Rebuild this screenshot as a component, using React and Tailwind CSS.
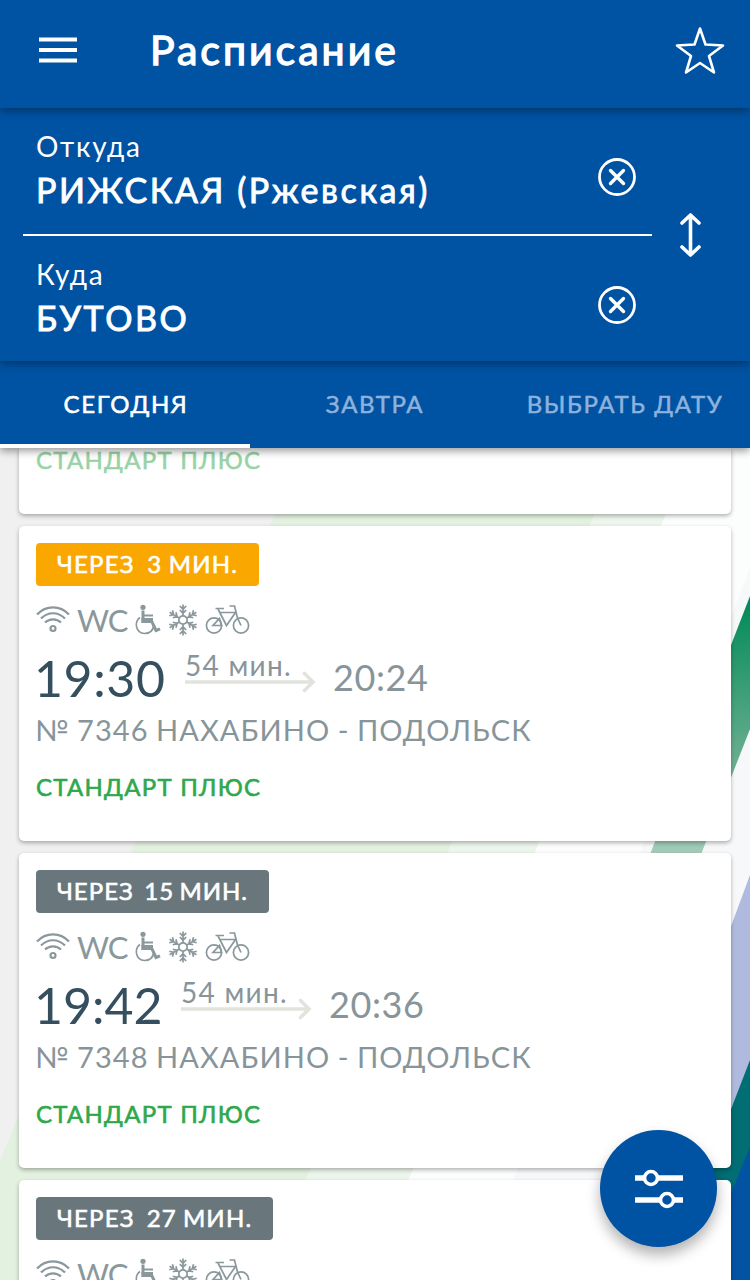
import React, { useState } from "react";

const trains = [
  {
    id: 1,
    wait: "ЧЕРЕЗ  3 МИН.",
    badge: "w-[223px] tracking-[1.2px] [word-spacing:-1.1px] bg-[#faa700]",
    time: "w-[129px] tracking-[0.6px]",
    start: "19:30",
    end: "20:24",
    route: "№ 7346 НАХАБИНО - ПОДОЛЬСК",
  },
  {
    id: 2,
    wait: "ЧЕРЕЗ  15 МИН.",
    badge: "w-[233px] tracking-[1px] [word-spacing:-1.9px] bg-[#69777d]",
    time: "w-[125px] tracking-normal",
    start: "19:42",
    end: "20:36",
    route: "№ 7348 НАХАБИНО - ПОДОЛЬСК",
  },
  {
    id: 3,
    wait: "ЧЕРЕЗ  27 МИН.",
    badge: "w-[237px] tracking-[1.2px] [word-spacing:-1.4px] bg-[#69777d]",
    time: "w-[129px] tracking-[0.6px]",
    start: "19:54",
    end: "20:48",
    route: "№ 7350 НАХАБИНО - ПОДОЛЬСК",
  },
];

const tabs = ["СЕГОДНЯ", "ЗАВТРА", "ВЫБРАТЬ ДАТУ"];

const ClearIcon = () => (
  <svg width="38" height="38" viewBox="0 0 38 38" fill="none" stroke="white">
    <circle cx="19" cy="19" r="17.5" strokeWidth="2.8" />
    <path d="M12.5 12.5 25.5 25.5M25.5 12.5 12.5 25.5" strokeWidth="3.4" strokeLinecap="round" />
  </svg>
);

const WifiIcon = () => (
  <svg width="34" height="32" viewBox="0 0 34 32" fill="none" stroke="#8a989c" strokeWidth="2.2">
    <path d="M1 10.5C10 1 24 1 33 10.5" />
    <path d="M5 14.5C12 7.5 22 7.5 29 14.5" />
    <path d="M9 18.5C13.5 14.2 20.5 14.2 25 18.5" />
    <circle cx="17" cy="24.5" r="2.5" />
  </svg>
);

const WheelchairIcon = () => (
  <svg width="26" height="32" viewBox="0 0 26 32" fill="none" stroke="#8a989c">
    <circle cx="8" cy="3.3" r="2.6" fill="#8a989c" stroke="none" />
    <path d="M8 6.5V17.5H16.8L21 26.5L25 24.8" strokeWidth="3" />
    <path d="M6.5 16.5H18" strokeWidth="5" />
    <path d="M8.5 11.5H18" strokeWidth="2" />
    <path d="M5 13.5C-1 18 .5 29 9.5 29.5C14.5 29.5 18 26.5 18.8 21.5" strokeWidth="1.6" />
  </svg>
);

const SnowIcon = () => (
  <svg width="30" height="32" viewBox="-15 -16 30 32" fill="none" stroke="#8a989c" strokeWidth="1.7">
    <circle r="4.2" />
    {[0, 60, 120, 180, 240, 300].map((angle) => (
      <path
        key={angle}
        transform={`rotate(${angle})`}
        d="M0 -4.2V-15.5M-3.2 -14 0 -10.8 3.2 -14M-3.2 -10 0 -6.8 3.2 -10"
      />
    ))}
  </svg>
);

const BikeIcon = () => (
  <svg width="45" height="32" viewBox="0 0 45 32" fill="none" stroke="#8a989c" strokeWidth="1.7">
    <circle cx="9" cy="21.5" r="7.6" />
    <circle cx="36" cy="21.5" r="7.6" />
    <path d="M8 21.5H16.5L14.5 14.5ZM13 5 21.5 21.5 30.5 8.5H15" />
    <path d="M10.5 4.5H19M32.5 14 36 21.5" />
    <path d="M24.5 2H29.5L32.5 14" />
  </svg>
);

const ArrowIcon = () => (
  <svg className="block" width="131" height="22" viewBox="0 0 131 22" fill="none" stroke="#e1e3dd" strokeWidth="3.6">
    <path d="M0 11H128" />
    <path d="M119.5 2.5 128 11 119.5 19.5" strokeLinecap="round" />
  </svg>
);

const Background = () => (
  <svg className="absolute inset-0" width="750" height="1280" viewBox="0 0 750 1280">
    <defs>
      <linearGradient id="greenBand" x1="0" y1="600" x2="0" y2="860" gradientUnits="userSpaceOnUse">
        <stop offset="0" stopColor="#008a58" />
        <stop offset="0.65" stopColor="#6fb092" />
        <stop offset="1" stopColor="#a9cfbc" />
      </linearGradient>
    </defs>
    <rect width="750" height="1280" fill="#f0f0f0" />
    <polygon points="303,448 750,448 750,1280 0,1280 0,1160" fill="#e3f1e0" />
    <polygon points="623,448 750,448 750,1280 262,1280" fill="#edf6ed" />
    <polygon points="691,448 750,448 750,1280 370,1280" fill="#fcfdfd" />
    <polygon points="750,568 750,1280 475,1280" fill="#f7f8fa" />
    <polygon points="750,596 750,729 700,857 649,857" fill="url(#greenBand)" />
    <polygon points="750,875 750,1280 600,1280" fill="#b0bade" />
    <polygon points="750,1060 750,1280 665,1280" fill="#006e73" />
    <polygon points="750,1147 750,1280 695,1280" fill="#0353a3" />
  </svg>
);

const StationField = ({ label, value }) => (
  <div className="flex h-[126px] items-start justify-between pl-[13px] pr-4">
    <div className="pt-5">
      <p className="mb-1.5 text-[28px] leading-9 tracking-[1.7px]">{label}</p>
      <p className="text-[34px] leading-10 tracking-[2.6px] [-webkit-text-stroke:0.9px_white]">{value}</p>
    </div>
    <button className="mt-[50px]">
      <ClearIcon />
    </button>
  </div>
);

const TrainCard = ({ train }) => (
  <div className="h-[315px] shrink-0 rounded-[5px] bg-white pt-[17px] pl-[17px] shadow-[0_2px_4px_rgba(0,0,0,0.3)]">
    <div className={`flex h-[43px] items-center rounded pb-0.5 pl-[21px] text-2xl whitespace-pre text-white ${train.badge}`}>
      <span className="[-webkit-text-stroke:0.6px_white]">{train.wait}</span>
    </div>
    <div className="mt-[18px] flex h-8 items-center text-[#8a989c]">
      <WifiIcon />
      <span className="ml-[7px] w-[50px] text-[31px] leading-8 tracking-[-1px]">WC</span>
      <span className="ml-2">
        <WheelchairIcon />
      </span>
      <span className="ml-[7px]">
        <SnowIcon />
      </span>
      <span className="ml-[7px]">
        <BikeIcon />
      </span>
    </div>
    <div className="mt-3 flex h-[60px] items-start">
      <span className={`-ml-0.5 text-[50px] leading-[60px] text-[#354f5e] ${train.time}`}>{train.start}</span>
      <div className="ml-[22px] w-[131px]">
        <p className="-mt-px h-6 text-[28px] leading-9 tracking-[1.3px] text-[#87959a]">54 мин.</p>
        <ArrowIcon />
      </div>
      <span className="-mt-px ml-[17px] text-[36px] leading-[60px] tracking-[0.6px] text-[#87959a]">{train.end}</span>
    </div>
    <p className="mt-1 -ml-px text-[29px] leading-9 tracking-[1.1px] [word-spacing:-1.2px] text-[#87959a]">
      {train.route}
    </p>
    <p className="mt-6 text-2xl leading-[30px] tracking-[1.25px] text-[#2fa84c] [-webkit-text-stroke:0.6px_#2fa84c]">
      СТАНДАРТ ПЛЮС
    </p>
  </div>
);

const App = () => {
  const [activeTab, setActiveTab] = useState(0);

  return (
    <div className="relative flex h-[1280px] w-[750px] flex-col overflow-hidden font-['Lato','Noto_Sans',sans-serif]">
      <Background />
      <header className="relative z-30 flex h-[108px] shrink-0 items-center bg-[#0052a2] pr-[25px] pb-2 pl-[39px] text-white shadow-[0_3px_8px_rgba(0,0,0,0.35)]">
        <svg width="38" height="28" viewBox="0 0 38 28" stroke="white" strokeWidth="4">
          <path d="M0 3.5H38M0 14H38M0 24.5H38" />
        </svg>
        <h1 className="ml-[73px] flex-1 text-[41px] leading-[48px] tracking-[3px] [-webkit-text-stroke:1.3px_white]">
          Расписание
        </h1>
        <svg width="50" height="50" viewBox="0 0 50 50" fill="none" stroke="white" strokeWidth="2.6" strokeLinejoin="round">
          <path d="M25 3.5 30.5 19.5 48 20.5 34 31 39 47.5 25 38 11 47.5 16 31 2 20.5 19.5 19.5Z" />
        </svg>
      </header>

      <section className="relative z-20 flex h-[253px] shrink-0 bg-[#0052a2] pl-[23px] text-white shadow-[0_3px_8px_rgba(0,0,0,0.35)]">
        <div className="w-[629px]">
          <StationField label="Откуда" value="РИЖСКАЯ (Ржевская)" />
          <div className="h-0.5 bg-white" />
          <StationField label="Куда" value="БУТОВО" />
        </div>
        <button className="ml-[27px] self-center">
          <svg width="24" height="46" viewBox="0 0 24 46" fill="none" stroke="white" strokeWidth="3.6" strokeLinecap="round" strokeLinejoin="round">
            <path d="M11.500 3V43M3 11 11.500 3 20 11M3 35 11.500 43 20 35" />
          </svg>
        </button>
      </section>

      <nav className="relative z-10 flex h-[87px] shrink-0 bg-[#0052a2] shadow-[0_3px_8px_rgba(0,0,0,0.4)]">
        {tabs.map((tab, index) => (
          <button
            key={tab}
            onClick={() => setActiveTab(index)}
            className={
              index === activeTab
                ? "h-[87px] w-[250px] border-b-4 border-white pt-0.5 pl-0.5 text-2xl tracking-[1.6px] whitespace-nowrap text-white [-webkit-text-stroke:0.6px_white]"
                : "h-[87px] w-[250px] border-b-4 border-transparent pt-0.5 text-2xl tracking-[1.6px] whitespace-nowrap text-[#8eb2dc] [-webkit-text-stroke:0.5px_#8eb2dc]"
            }
          >
            {tab}
          </button>
        ))}
      </nav>

      <main className="relative flex min-h-0 flex-1 flex-col gap-3 overflow-hidden px-[19px]">
        <div className="h-[66px] shrink-0 rounded-b-[5px] bg-white pl-[17px] shadow-[0_2px_4px_rgba(0,0,0,0.3)]">
          <p className="-mt-[3px] text-2xl leading-[30px] tracking-[1.25px] text-[#97d3a5] [-webkit-text-stroke:0.5px_#97d3a5]">
            СТАНДАРТ ПЛЮС
          </p>
        </div>
        {trains.map((train) => (
          <TrainCard key={train.id} train={train} />
        ))}
      </main>

      <button className="absolute top-[1130px] left-[600px] z-40 flex h-[117px] w-[117px] items-center justify-center rounded-full bg-[#0052a2] shadow-[0_8px_14px_rgba(0,0,0,0.3)]">
        <svg width="48" height="42" viewBox="0 0 48 42" stroke="white" fill="#0052a2">
          <path d="M0 10H48M0 32H48" strokeWidth="5.5" />
          <circle cx="16" cy="10" r="6.5" strokeWidth="3.6" />
          <circle cx="32" cy="32" r="6.5" strokeWidth="3.6" />
        </svg>
      </button>
    </div>
  );
};

export default App;
